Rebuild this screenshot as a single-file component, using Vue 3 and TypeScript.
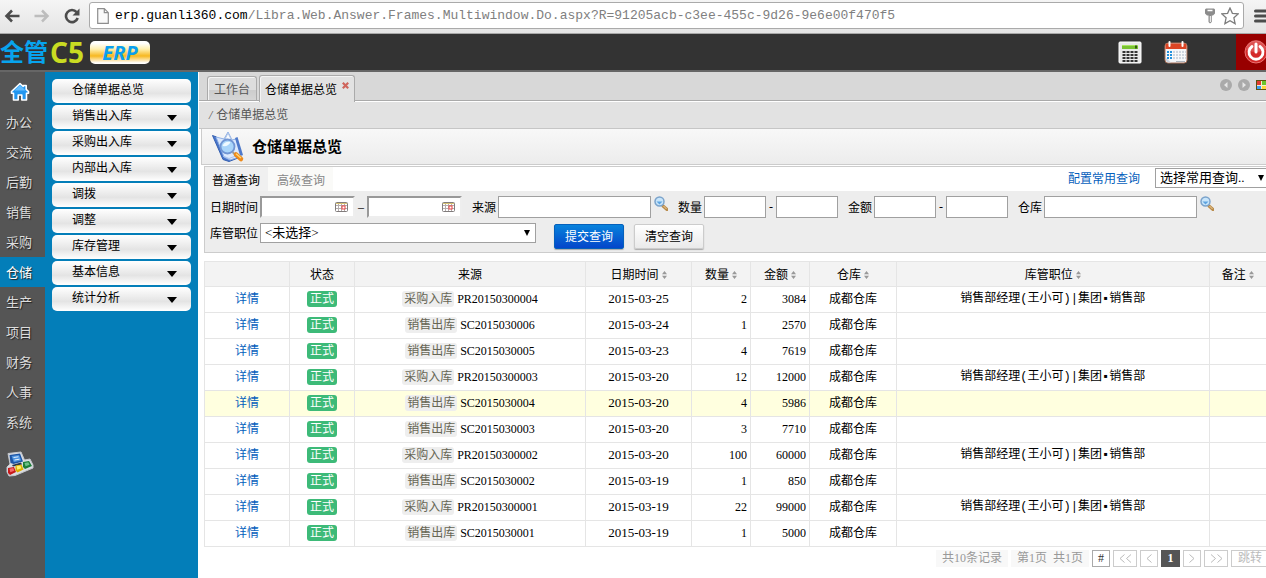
<script setup lang="ts">
import { ref } from 'vue'

interface Doc {
  kind: string
  code: string
  date: string
  qty: string
  amount: string
  owner: string
}

const url = ref('/Libra.Web.Answer.Frames.Multiwindow.Do.aspx?R=91205acb-c3ee-455c-9d26-9e6e00f470f5')
const modules = ['办公', '交流', '后勤', '销售', '采购', '仓储', '生产', '项目', '财务', '人事', '系统']
const activeModule = ref('仓储')
const menu = ['仓储单据总览', '销售出入库', '采购出入库', '内部出入库', '调拨', '调整', '库存管理', '基本信息', '统计分析']

const owner = '销售部经理(王小可)|集团▪销售部'
const docs: Doc[] = [
  { kind: '采购入库', code: 'PR20150300004', date: '2015-03-25', qty: '2', amount: '3084', owner },
  { kind: '销售出库', code: 'SC2015030006', date: '2015-03-24', qty: '1', amount: '2570', owner: '' },
  { kind: '销售出库', code: 'SC2015030005', date: '2015-03-23', qty: '4', amount: '7619', owner: '' },
  { kind: '采购入库', code: 'PR20150300003', date: '2015-03-20', qty: '12', amount: '12000', owner },
  { kind: '销售出库', code: 'SC2015030004', date: '2015-03-20', qty: '4', amount: '5986', owner: '' },
  { kind: '销售出库', code: 'SC2015030003', date: '2015-03-20', qty: '3', amount: '7710', owner: '' },
  { kind: '采购入库', code: 'PR20150300002', date: '2015-03-20', qty: '100', amount: '60000', owner },
  { kind: '销售出库', code: 'SC2015030002', date: '2015-03-19', qty: '1', amount: '850', owner: '' },
  { kind: '采购入库', code: 'PR20150300001', date: '2015-03-19', qty: '22', amount: '99000', owner },
  { kind: '销售出库', code: 'SC2015030001', date: '2015-03-19', qty: '1', amount: '5000', owner: '' },
]
const selected = ref(4)

const columns = [
  { name: '', cls: 'c-link', sort: false },
  { name: '状态', cls: 'c-state', sort: false },
  { name: '来源', cls: 'c-source', sort: false },
  { name: '日期时间', cls: 'c-date', sort: true },
  { name: '数量', cls: 'c-qty', sort: true },
  { name: '金额', cls: 'c-amount', sort: true },
  { name: '仓库', cls: 'c-store', sort: true },
  { name: '库管职位', cls: 'c-owner', sort: true },
  { name: '备注', cls: 'c-note', sort: true },
]
</script>

<template>
  <div class="page">
    <div class="browser">
      <button class="bare nav" aria-label="后退">
        <svg width="16" height="14" viewBox="0 0 16 14"><path d="M8 1.5 2.5 7 8 12.5M3 7h12.500" fill="none" stroke="#4c4c4c" stroke-width="2.600" /></svg>
      </button>
      <button class="bare nav" aria-label="前进">
        <svg width="16" height="14" viewBox="0 0 16 14"><path d="M8 1.500 13.500 7 8 12.500M13 7H.5" fill="none" stroke="#bdbdbd" stroke-width="2.500" /></svg>
      </button>
      <button class="bare nav reload" aria-label="刷新">
        <svg width="16" height="16" viewBox="0 0 16 16"><path d="M12.600 4.200A6 6 0 1 0 13.700 10" fill="none" stroke="#4c4c4c" stroke-width="2.600" /><path d="M15.500.5v7H8.500z" fill="#4c4c4c" /></svg>
      </button>
      <div class="address">
        <svg width="12" height="16" viewBox="0 0 12 16"><path d="M.7.700h6.600l4 4v10.600H.7zM7.300.700v4h4" fill="#fafafa" stroke="#8e8e8e" stroke-width="1.200" /></svg>
        <span class="url"><b>erp.guanli360.com</b>{{ url }}</span>
        <svg width="10" height="16" viewBox="0 0 10 16"><path d="M1 .5h8l1 1v4L8 7.500H6.800V14L5 15.500 3.500 14V7.500H2L0 5.500v-4z" fill="#8c8c8c" /><path d="M2.500 2.500h5" stroke="#fff" stroke-width="1.500" /><path d="M5.300 8v6" stroke="#fff" /></svg>
        <svg width="18" height="18" viewBox="0 0 18 18"><path d="m9 1 2.400 5.300 5.800.6-4.300 3.900 1.200 5.800L9 13.700l-5.100 2.900 1.200-5.800L.8 6.900l5.800-.6z" fill="#fff" stroke="#7d7d7d" stroke-width="1.300" /></svg>
      </div>
      <button class="bare burger" aria-label="菜单">
        <svg width="16" height="14" viewBox="0 0 16 14"><path d="M1.500 2h14M1.500 7h14M1.500 12h14" stroke="#4c4c4c" stroke-width="3" stroke-linecap="round" /></svg>
      </button>
    </div>

    <header class="top">
      <div class="logo">
        <span class="logo-cn">全管</span>
        <span class="logo-c5">C5</span>
        <span class="logo-erp">ERP</span>
      </div>
      <div class="tools">
        <button class="bare" aria-label="计算器">
          <svg width="24" height="24" viewBox="0 0 24 24">
            <rect x="1" y="2" width="22" height="21" rx="1" fill="#e9e9e9" stroke="#fff" />
            <rect x="4" y="5" width="16" height="4" fill="#79c231" /><path d="M4 5.500h16" stroke="#a7e45e" />
            <path d="M17 5.500h2v3h-2z" fill="#315a10" />
            <g stroke="#333" stroke-width="2" stroke-dasharray="3 1"><path d="M4.500 12h15.500M4.500 15h15.500M4.500 18h15.500M4.500 21h15.500" /></g>
          </svg>
        </button>
        <button class="bare" aria-label="日历">
          <svg width="24" height="24" viewBox="0 0 24 24">
            <rect x="1" y="3" width="22" height="20" rx="3" fill="#f3f5f8" stroke="#aa735b" />
            <path d="M1.500 9V5.500a2 2 0 0 1 2-2h17a2 2 0 0 1 2 2V9z" fill="#dc4525" />
            <path d="M5.500 2v4M18.500 2v4" stroke="#fff" stroke-width="2" stroke-linecap="round" />
            <path d="M3 11h5v8H3z" fill="#2492dd" /><path d="M9 11h13v8H9z" fill="#cfd6df" />
            <path d="M2 13.500h20M2 16.500h20M5.500 10v10M8.500 10v10M11.500 10v10M14.500 10v10M17.500 10v10M20.500 10v10" stroke="#f8f9fa" />
            <path d="m2 18 5 4.500H4.500Q2 22.500 2 20z" fill="#ccd3dc" /><path d="M12 21.500h9" stroke="#aeb5bd" />
          </svg>
        </button>
        <button class="bare power" aria-label="退出">
          <svg width="24" height="24" viewBox="0 0 24 24">
            <circle cx="12" cy="12" r="11" fill="#d42a2a" stroke="#ee7373" />
            <path d="M2 10a10 10 0 0 1 20 0Q12 14 2 10" fill="#e56c6c" opacity=".6" />
            <path d="M8 6.500a7 7 0 1 0 8 0" fill="none" stroke="#fff" stroke-width="2.800" stroke-linecap="round" /><path d="M12 4v8" stroke="#fff" stroke-width="3" stroke-linecap="round" />
          </svg>
        </button>
      </div>
    </header>

    <div class="body">
      <nav class="rail">
        <a href="#" class="home" aria-label="首页">
          <svg width="20" height="20" viewBox="0 0 20 20">
            <path d="M10 1.500 1.500 9.500v1.800h2V18h4.700v-5h3.600v5h4.700v-6.700h2V9.500l-2.300-2.200V3.500h-3v1z" fill="#2196f0" stroke="#fff" stroke-width="1.600" stroke-linejoin="round" />
            <path d="M10 3 4.500 8.500h11z" fill="#63bdff" />
          </svg>
        </a>
        <a v-for="m in modules" :key="m" href="#" :class="{ on: m === activeModule }" @click.prevent="activeModule = m">{{ m }}</a>
        <a href="#" class="apps" aria-label="应用">
          <svg width="28" height="26" viewBox="0 0 28 26">
            <path d="M2 2.500 15 1l3.500 8L24 8l3 6v3L9 24.500l-6 .5-2-4v-5l3-3z" fill="#dadde2" stroke="#c3c6cc" stroke-linejoin="round" />
            <path d="m3.500 4 10.500-1.500 3 8-9.500 2.500-3-1z" fill="#1d55a5" /><path d="m5.500 5 7.500-1 2.300 5.500-7.500 1.700z" fill="#4d93e0" /><path d="m7.500 6.500 5-.7M8.500 9l5-.8" stroke="#e5f2ff" />
            <path d="m6 14 9-2.500 1 2-9 2z" fill="#26374f" />
            <path d="m2 17 6-1 2 5-6 3-2-2z" fill="#c71a1a" /><path d="m3.500 17.800 3.800-.7 1 2.600-4 1.500z" fill="#f46a6a" />
            <path d="m9.500 14.500 6-1 2 5-6 3-2-2z" fill="#deb000" /><path d="m10.500 15.300 3.800-.7 1 2.600-4 1.500z" fill="#fff06e" />
            <path d="m17 11 6-1 3 5-7 3-2-2z" fill="#1b7f38" /><path d="m18.500 12 3.800-.7 1.300 2.400-4 1.500z" fill="#6dc287" />
          </svg>
        </a>
      </nav>

      <nav class="menu">
        <button v-for="(m, i) in menu" :key="m">
          {{ m }}
          <svg v-if="i > 0" width="10" height="6" viewBox="0 0 10 6"><path d="M0 0h10L5 6z" fill="#000" /></svg>
        </button>
      </nav>

      <main class="work">
        <div class="tabs">
          <button class="tab">工作台</button>
          <button class="tab current">
            仓储单据总览
            <svg width="7" height="7" viewBox="0 0 7 7"><path d="m.8.8 5.400 5.400M6.200.8.800 6.200" stroke="#cf655c" stroke-width="2.200" /></svg>
          </button>
          <div class="tab-tools">
            <button class="bare" aria-label="上一个"><svg width="12" height="12" viewBox="0 0 12 12"><circle cx="6" cy="6" r="6" fill="#aaa" /><path d="M7.500 3v6L4 6z" fill="#e6e6e6" /></svg></button>
            <button class="bare" aria-label="下一个"><svg width="12" height="12" viewBox="0 0 12 12"><circle cx="6" cy="6" r="6" fill="#aaa" /><path d="M4.500 3v6L8 6z" fill="#e6e6e6" /></svg></button>
            <button class="bare" aria-label="窗口"><svg width="11" height="10" viewBox="0 0 11 10"><path d="M0 0h11v10H0z" fill="#5c5310" /><path d="M1 1h4v4H1z" fill="#e33b2e" /><path d="M6 1h4v4H6z" fill="#69c32b" /><path d="M1 6h4v3H1z" fill="#3d9df0" /><path d="M6 6h4v3H6z" fill="#ffd83b" /><path d="M5.500 1v8M1 5.500h9" stroke="#f5f0cf" /></svg></button>
          </div>
        </div>
        <div class="crumb"><i>/</i> 仓储单据总览</div>
        <div class="title">
          <svg width="34" height="32" viewBox="0 0 34 32">
            <path d="m1.500 4.500 4 1.500L9 17l9 5 9 5-9 3.500-6-2z" fill="#4a76cc" stroke="#3560b0" stroke-linejoin="round" />
            <path d="m5 6 8 2 4-7 4 8 4-1 6 17-12 4-6-3z" fill="#dce9fd" stroke="#8fb0e6" stroke-linejoin="round" />
            <path d="m14 8 3-6 3.500 7z" fill="#f8fbff" stroke="#a7bfe4" />
            <path d="m24 7 2.500-1L32 24l-3 .5z" fill="#4e79ca" /><path d="m12 25 6 2.500 8-3" fill="none" stroke="#a8c2ee" />
            <circle cx="16.500" cy="15.500" r="7" fill="#a9d5fa" stroke="#7196d4" stroke-width="1.800" />
            <path d="M11.500 15q2-5 8-4-2 5-8 4" fill="#effaff" /><path d="m21.500 21 3 3" stroke="#9a9a9a" stroke-width="2" /><path d="m25 23.500 5 4.500" stroke="#ee8a1a" stroke-width="4.500" stroke-linecap="round" /><path d="m25 22.800 5 4.200" stroke="#ffd573" stroke-width="1.500" />
          </svg>
          <h1>仓储单据总览</h1>
        </div>

        <form class="query" @submit.prevent>
          <div class="query-tabs">
            <button type="button" class="qt on">普通查询</button>
            <button type="button" class="qt">高级查询</button>
            <a href="#" class="config">配置常用查询</a>
            <span class="pick saved"><select aria-label="常用查询"><option>选择常用查询..</option></select><svg width="6" height="6" viewBox="0 0 6 6"><path d="M0 0h6L3 6z" /></svg></span>
          </div>
          <div class="fields">
            <div class="group">
              <label for="from">日期时间</label>
              <span v-for="(id, i) in ['from', 'to']" :key="id" class="group">
                <span v-if="i" class="dash wide">–</span>
                <span class="date">
                  <input :id="id" type="text" :aria-label="i ? '结束日期' : undefined" />
                  <svg width="13" height="10" viewBox="0 0 13 10"><rect x=".5" y=".5" width="12" height="9" rx="1" fill="#fff" stroke="#817c7c" /><path d="M1 3.500h11M1 6.500h11M3.500 1v8M6.500 1v8M9.500 1v8" stroke="#b5adad" /><path d="M1 1.500h11" stroke="#d7c475" /><rect x="7" y="4" width="3" height="3" fill="#fff" stroke="#e84444" /></svg>
                </span>
              </span>
            </div>
            <div class="group">
              <label for="src">来源</label>
              <input id="src" class="long" type="text" />
              <button type="button" class="bare find" aria-label="查找来源"><svg width="14" height="15" viewBox="0 0 14 15"><path d="m9 10 4 3.500" stroke="#b98b4a" stroke-width="3" stroke-linecap="round" /><path d="m9.500 10 3 3" stroke="#efcf9a" /><circle cx="5.500" cy="5.500" r="4.500" fill="#c8e5fa" stroke="#7ba3cb" stroke-width="1.500" /><path d="M2.500 5.500h6l-3 3z" fill="#5da3df" /></svg></button>
            </div>
            <div class="group">
              <label for="qty">数量</label>
              <input id="qty" class="short" type="text" /><span class="dash">-</span><input class="short" type="text" aria-label="最大数量" />
            </div>
            <div class="group">
              <label for="amt">金额</label>
              <input id="amt" class="short" type="text" /><span class="dash">-</span><input class="short" type="text" aria-label="最大金额" />
            </div>
            <div class="group">
              <label for="store">仓库</label>
              <input id="store" class="long" type="text" />
              <button type="button" class="bare find" aria-label="查找仓库"><svg width="14" height="15" viewBox="0 0 14 15"><path d="m9 10 4 3.500" stroke="#b98b4a" stroke-width="3" stroke-linecap="round" /><path d="m9.500 10 3 3" stroke="#efcf9a" /><circle cx="5.500" cy="5.500" r="4.500" fill="#c8e5fa" stroke="#7ba3cb" stroke-width="1.500" /><path d="M2.500 5.500h6l-3 3z" fill="#5da3df" /></svg></button>
            </div>
          </div>
          <div class="fields second">
            <div class="group">
              <label for="post">库管职位</label>
              <span class="pick post"><select id="post"><option>&lt;未选择&gt;</option></select><svg width="6" height="6" viewBox="0 0 6 6"><path d="M0 0h6L3 6z" /></svg></span>
            </div>
            <div class="actions">
              <button type="submit" class="btn primary">提交查询</button>
              <button type="reset" class="btn">清空查询</button>
            </div>
          </div>
        </form>

        <table>
          <colgroup><col v-for="c in columns" :key="c.cls" :class="c.cls" /></colgroup>
          <thead>
            <tr>
              <th v-for="c in columns" :key="c.cls" scope="col">{{ c.name }}<svg v-if="c.sort" width="5" height="8" viewBox="0 0 5 8"><path d="M0 3.300 2.500 0 5 3.300zM0 4.700h5L2.500 8z" fill="#999" /></svg></th>
            </tr>
          </thead>
          <tbody>
            <tr v-for="(d, i) in docs" :key="d.code" :class="{ picked: i === selected }" @click="selected = i">
              <td><a href="#">详情</a></td>
              <td><span class="state">正式</span></td>
              <td><span class="kind">{{ d.kind }}</span> {{ d.code }}</td>
              <td class="day">{{ d.date }}</td>
              <td class="num">{{ d.qty }}</td>
              <td class="num">{{ d.amount }}</td>
              <td>成都仓库</td>
              <td class="owner">{{ d.owner }}</td>
              <td></td>
            </tr>
          </tbody>
        </table>

        <div class="pager">
          <span class="info">共10条记录</span>
          <span class="info">第1页&nbsp; 共1页</span>
          <button class="hash">#</button>
          <button class="far" aria-label="首页"><svg width="13" height="9" viewBox="0 0 13 9"><path d="M5.500.5 1 4.500l4.500 4M12 .5l-4.500 4 4.500 4" /></svg></button>
          <button aria-label="上一页"><svg width="6" height="9" viewBox="0 0 6 9"><path d="M5.500.5 1 4.500l4.500 4" /></svg></button>
          <button class="now">1</button>
          <button aria-label="下一页"><svg width="6" height="9" viewBox="0 0 6 9"><path d="m.5.500 4.500 4-4.500 4" /></svg></button>
          <button class="far" aria-label="末页"><svg width="13" height="9" viewBox="0 0 13 9"><path d="M1 .5l4.500 4-4.500 4M7.500.5l4.500 4-4.500 4" /></svg></button>
          <button class="jump">跳转</button>
        </div>
      </main>
    </div>
  </div>
</template>

<style>
body {
  margin: 0;
  background: #fff;
}
</style>

<style scoped>
.page {
  display: flex;
  flex-direction: column;
  min-height: 100vh;
  overflow: hidden;
  font: 12px/16px "Liberation Serif", "Noto Sans CJK SC", sans-serif;
  color: #000;
}
.page * { box-sizing: border-box; }
svg { display: block; flex: none; }
button, input, select { font: inherit; color: inherit; margin: 0; padding: 0; border-radius: 0; }
a { color: #0560bc; text-decoration: none; }
.bare { display: flex; border: 0; background: none; }

/* browser bar */
.browser {
  display: flex;
  align-items: center;
  height: 34px;
  padding: 0 0 2px 4px;
  background: linear-gradient(#f5f5f5, #e4e4e4);
  border-bottom: 1px solid #a8a8a8;
}
.nav { margin-right: 14px; }
.reload { margin-right: 9px; }
.address {
  display: flex;
  flex: 1;
  align-items: center;
  gap: 6px;
  min-width: 0;
  height: 27px;
  padding: 0 4px 0 7px;
  border: 1px solid #aaa;
  border-radius: 3px;
  background: #fff;
}
.url {
  flex: 1;
  min-width: 0;
  overflow: hidden;
  white-space: nowrap;
  font: 13px/20px "Liberation Mono", monospace;
  color: #808080;
}
.url b { font-weight: normal; color: #000; }
.burger { margin: 0 -4px 0 10px; }

/* header */
.top {
  display: flex;
  justify-content: space-between;
  height: 38px;
  background: #333;
  border-bottom: 2px solid #666;
}
.logo { display: flex; align-items: center; font-family: "Noto Sans", "Noto Sans CJK SC", sans-serif; font-weight: bold; }
.logo-cn { font-size: 24px; line-height: 34px; color: #08a4ee; }
.logo-c5 { width: 40px; margin-left: 2px; font-size: 28px; line-height: 34px; color: #c9dc22; }
.logo-erp {
  width: 60px;
  border-radius: 5px;
  background: linear-gradient(#fff 10%, #fff0b0 35%, #f7b821 65%, #fff 95%);
  font-size: 20px;
  line-height: 23px;
  font-style: italic;
  text-align: center;
  color: #0a9fee;
}
.tools { display: flex; align-items: center; gap: 22px; }
.power {
  align-items: center;
  justify-content: center;
  width: 40px;
  height: 36px;
  margin: 0 -10px 0 26px;
  background: #980000;
}

/* left side */
.body { display: flex; flex: 1; }
.rail { width: 45px; flex: none; background: #555; }
.rail a {
  display: block;
  height: 30px;
  padding-left: 6px;
  font-size: 13px;
  line-height: 32px;
  color: #ddd;
  text-shadow: 1px 1px 1px #222;
}
.rail .on { background: #037eb9; color: #fff; }
.rail .home { height: 35px; padding: 10px 0 0 10px; }
.rail .apps { padding-top: 14px; }
.menu {
  display: flex;
  flex: none;
  flex-direction: column;
  gap: 2px;
  width: 154px;
  padding: 7px 7px 0;
  background: #037eb9;
  border-right: 1px solid #fff;
}
.menu button {
  display: flex;
  align-items: center;
  justify-content: space-between;
  height: 24px;
  padding: 0 14px 2px 20px;
  border: 0;
  border-radius: 5px;
  background: linear-gradient(#fff, #e4e4e4 60%, #fff);
}
.menu svg { margin-top: 3px; }

/* workspace */
.work { flex: 1; min-width: 0; }
.tabs {
  display: flex;
  align-items: flex-end;
  gap: 2px;
  height: 30px;
  padding: 3px 0 0 8px;
  background: #d8d8d8;
  box-shadow: inset 0 -1px #fff, inset 0 -2px #aaa;
}
.tab {
  display: flex;
  gap: 5px;
  height: 24px;
  margin-bottom: 2px;
  padding: 5px 6px 0;
  border: 1px solid #aaa;
  border-bottom: 0;
  border-radius: 3px 3px 0 0;
  background: linear-gradient(#ddd, #ddd 55%, #ccc 56%, #d5d5d5);
  box-shadow: inset 1px 1px #f4f4f4;
  color: #555;
}
.tab.current { height: 27px; margin-bottom: 0; padding: 6px 5px 0; background: #e2e2e2; color: #000; }
.tab-tools { display: flex; align-items: center; gap: 6px; height: 22px; margin: 0 -1px 6px auto; }
.crumb { height: 27px; padding: 5px 10px; background: #e2e2e2; border-bottom: 1px solid #c6c6c6; color: #555; }
.crumb i { margin-right: 1px; }
.title {
  display: flex;
  align-items: center;
  gap: 7px;
  height: 36px;
  margin-left: 2px;
  padding-left: 9px;
  border: solid #ccc;
  border-width: 0 0 1px 1px;
  background: linear-gradient(#f8f8f8, #ececec);
}
h1 { margin: 0; font-size: 15px; line-height: 20px; }

/* query form */
.query { margin: 1px 0 0 5px; border: 1px solid #ccc; border-right: 0; background: #ededed; height: 87px; }
.query-tabs { display: flex; align-items: flex-start; height: 24px; background: #fff; }
.qt { height: 24px; padding: 3px 8px 0 7px; border: 0; background: #fafaf8; color: #888; }
.qt.on { background: #f0f0f0; color: #000; }
.qt + .qt { padding-left: 9px; }
.config { margin: 4px 15px 0 auto; }
.pick { position: relative; display: block; height: 20px; }
.pick select {
  width: 100%;
  height: 100%;
  padding: 0 4px;
  border: 1px solid #a0a0a0;
  background: #fff;
  appearance: none;
  font-size: 13px;
}
.pick svg { position: absolute; top: 7px; right: 6px; pointer-events: none; }
.saved { width: 115px; margin: 1px -4px 0 0; }
.post { width: 276px; }
.fields { display: flex; align-items: flex-start; gap: 10px; padding: 5px 0 0 5px; }
.fields.second { gap: 18px; padding-top: 5px; }
.group { display: flex; align-items: center; gap: 2px; flex: none; }
.group > label { padding-top: 2px; }
.group > .group { gap: 0; }
.group > .group + .group { margin-left: -2px; }
.group input { height: 22px; border: 1px solid #a0a0a0; background: #fff; }
.group .long { width: 153px; }
.group .short { width: 62px; }
.dash { width: 6px; text-align: center; }
.dash.wide { width: 12px; }
.date { position: relative; display: block; }
.group .date input { display: block; width: 95px; border: 2px solid; border-color: #999 #eee #eee #999; }
.date svg { position: absolute; top: 6px; right: 7px; pointer-events: none; }
.find { align-self: flex-start; margin-left: 1px; }
.actions { display: flex; gap: 10px; padding-top: 1px; }
.btn {
  width: 70px;
  height: 25px;
  border: 1px solid #ccc;
  border-radius: 2px;
  background: linear-gradient(#fff, #eaeaea);
  box-shadow: 0 1px 1px #aaa;
}
.btn.primary { border-color: #0560bb; background: linear-gradient(#0782dc, #0446ca); color: #fff; }

/* grid */
table { width: 100%; border-collapse: collapse; table-layout: fixed; }
.query + table { width: calc(100% - 5px); margin: 8px 0 0 5px; }
.c-link { width: 85px; }
.c-state { width: 65px; }
.c-source { width: 231px; }
.c-date { width: 106px; }
.c-qty { width: 59px; }
.c-amount { width: 59px; }
.c-store { width: 87px; }
.c-note { width: 57px; }
th, td { height: 26px; padding: 0 3px 2px; border: 1px solid #e5e5e5; text-align: center; white-space: nowrap; }
th:last-child, td:last-child { border-right: 0; }
th { height: 25px; padding: 2px 0 0; background: #f3f3f3; font-weight: normal; }
th svg { display: inline-block; margin-left: 3px; }
.num { text-align: right; }
.day { font-size: 13px; }
.owner { font-family: "Liberation Mono", "Noto Sans CJK SC", monospace; }
.picked { background: #ffffdf; }
.state, .kind { display: inline-block; padding: 0 3px; border-radius: 3px; line-height: 16px; }
.state { background: #3dba78; color: #fff; }
.kind { padding: 0 2px; background: #eee; color: #665; }

.pager { display: flex; justify-content: flex-end; gap: 3px; margin: 3px -3px 0 0; color: #999; }
.pager > * { height: 17px; line-height: 17px; }
.info { padding: 0 6px; background: #f8f8f8; }
.pager button { display: flex; align-items: center; justify-content: center; width: 18px; border: 1px solid #ccc; background: #fff; }
.pager .far { width: 24px; }
.pager .hash { color: #333; border-color: #aaa; }
.pager .now { width: 19px; border-color: #555; background: #555; color: #fff; font-weight: bold; }
.pager .jump { width: 38px; color: #bbb; }
.pager path { fill: none; stroke: #bbb; }
</style>
